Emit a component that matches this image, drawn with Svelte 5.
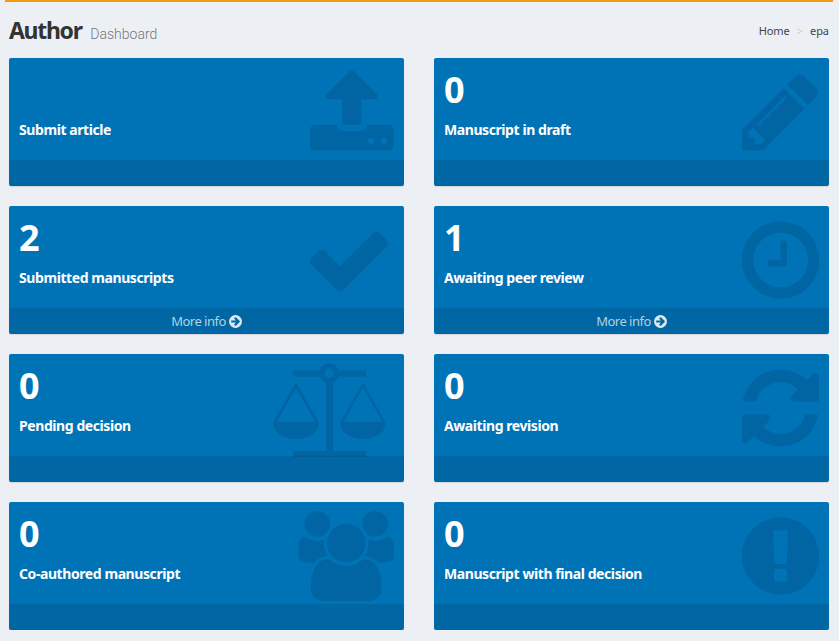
<script>
  // font-awesome style glyphs, 1792 units = 90px
  const glyphs = {
    upload: {
      x: 64,
      w: 1664,
      d: "M1344 1472q0-26-19-45t-45-19-45 19-19 45 19 45 45 19 45-19 19-45zm256 0q0-26-19-45t-45-19-45 19-19 45 19 45 45 19 45-19 19-45zm128-224v320q0 40-28 68t-68 28h-1472q-40 0-68-28t-28-68v-320q0-40 28-68t68-28h427q21 56 70.5 92t110.5 36h256q61 0 110.5-36t70.5-92h427q40 0 68 28t28 68zm-325-648q-17 40-59 40h-256v448q0 26-19 45t-45 19h-256q-26 0-45-19t-19-45v-448h-256q-42 0-59-40-17-39 14-69l448-448q18-19 45-19t45 19l448 448q31 30 14 69z"
    },
    pencil: {
      x: 128,
      w: 1536,
      d: "M491 1536l91-91-235-235-91 91v107h128v128h107zm523-928q0-22-22-22-10 0-17 7l-542 542q-7 7-7 17 0 22 22 22 10 0 17-7l542-542q7-7 7-17zm-54-192l416 416-832 832h-416v-416zm683 96q0 53-37 90l-166 166-416-416 166-165q36-38 90-38 53 0 91 38l235 234q37 39 37 91z"
    },
    check: {
      x: 0,
      w: 1792,
      d: "M1671 566q0 40-28 68l-724 724-136 136q-28 28-68 28t-68-28l-136-136-362-362q-28-28-28-68t28-68l136-136q28-28 68-28t68 28l294 295 656-657q28-28 68-28t68 28l136 136q28 28 28 68z"
    },
    clock: {
      x: 128,
      w: 1536,
      d: "M1024 544v448q0 14-9 23t-23 9h-320q-14 0-23-9t-9-23v-64q0-14 9-23t23-9h224v-352q0-14 9-23t23-9h64q14 0 23 9t9 23zm416 352q0-148-73-273t-198-198-273-73-273 73-198 198-73 273 73 273 198 198 273 73 273-73 198-198 73-273zm224 0q0 209-103 385.5t-279.5 279.5-385.5 103-385.5-103-279.5-279.5-103-385.5 103-385.5 279.5-279.5 385.5-103 385.5 103 279.5 279.5 103 385.5z"
    },
    refresh: {
      x: 128,
      w: 1536,
      d: "M1639 1056q0 5-1 7-64 268-268 434.5t-478 166.5q-146 0-282.5-55t-243.5-157l-129 129q-19 19-45 19t-45-19-19-45v-448q0-26 19-45t45-19h448q26 0 45 19t19 45-19 45l-137 137q71 66 161 102t187 36q134 0 250-65t186-179q11-17 53-117 8-23 30-23h192q13 0 22.5 9.5t9.5 22.5zm25-800v448q0 26-19 45t-45 19h-448q-26 0-45-19t-19-45 19-45l138-138q-148-137-349-137-134 0-250 65t-186 179q-11 17-53 117-8 23-30 23h-199q-13 0-22.5-9.5t-9.5-22.5v-7q65-268 270-434.5t480-166.5q146 0 284 55.5t245 156.5l130-129q19-19 45-19t45 19 19 45z"
    },
    users: {
      x: 0,
      w: 1920,
      d: "M593 896q-162 5-265 128h-134q-82 0-138-40.5t-56-118.5q0-353 124-353 6 0 43.5 21t97.5 42.5 119 21.5q67 0 133-23-5 37-5 66 0 139 81 256zm1071 637q0 120-73 189.5t-194 69.5h-874q-121 0-194-69.5t-73-189.5q0-53 3.5-103.5t14-109 26.5-108.5 43-97.5 62-81 85.5-53.5 111.5-20q10 0 43 21.5t73 48 107 48 135 21.5 135-21.5 107-48 73-48 43-21.5q61 0 111.5 20t85.5 53.5 62 81 43 97.5 26.5 108.5 14 109 3.5 103.5zm-1024-1277q0 106-75 181t-181 75-181-75-75-181 75-181 181-75 181 75 75 181zm704 384q0 159-112.5 271.5t-271.5 112.5-271.5-112.5-112.5-271.5 112.5-271.5 271.5-112.5 271.5 112.5 112.5 271.5zm576 225q0 78-56 118.5t-138 40.5h-134q-103-123-265-128 81-117 81-256 0-29-5-66 66 23 133 23 59 0 119-21.5t97.5-42.5 43.5-21q124 0 124 353zm-128-609q0 106-75 181t-181 75-181-75-75-181 75-181 181-75 181 75 75 181z"
    },
    alert: {
      x: 128,
      w: 1536,
      d: "M896 128q209 0 385.5 103t279.5 279.5 103 385.5-103 385.5-279.5 279.5-385.5 103-385.5-103-279.5-279.5-103-385.5 103-385.5 279.5-279.5 385.5-103zm128 1247v-190q0-14-9-23.5t-22-9.5h-192q-13 0-23 10t-10 23v190q0 13 10 23t23 10h192q13 0 22-9.5t9-23.5zm-2-344l18-621q0-12-10-18-10-8-24-8h-220q-14 0-24 8-10 6-10 18l17 621q0 10 10 17.5t24 7.5h185q14 0 23.5-7.5t10.5-17.5z"
    }
  };

  const cards = [
    { count: "", label: "Submit article", icon: "upload", more: false },
    { count: "0", label: "Manuscript in draft", icon: "pencil", more: false },
    { count: "2", label: "Submitted manuscripts", icon: "check", more: true },
    { count: "1", label: "Awaiting peer review", icon: "clock", more: true },
    { count: "0", label: "Pending decision", icon: "scale", more: false },
    { count: "0", label: "Awaiting revision", icon: "refresh", more: false },
    { count: "0", label: "Co-authored manuscript", icon: "users", more: false },
    { count: "0", label: "Manuscript with final decision", icon: "alert", more: false }
  ];
</script>

<div class="topbar"></div>

<header class="page-header">
  <h1>Author <small>Dashboard</small></h1>
  <ol class="breadcrumb">
    <li>Home</li>
    <li class="sep">&gt;</li>
    <li>epa</li>
  </ol>
</header>

<main class="grid">
  {#each cards as card}
    <div class="small-box">
      <div class="inner">
        <h3>{card.count}</h3>
        <p>{card.label}</p>
      </div>

      {#if card.icon === "scale"}
        <svg class="icon scale" viewBox="0 0 113 95" width="113" height="95">
          <rect x="20" y="7.3" width="27" height="6.4" />
          <rect x="66" y="7.3" width="27" height="6.4" />
          <path
            fill-rule="evenodd"
            d="M56.3 0.3a10 10 0 1 0 0 20a10 10 0 1 0 0-20zM56.3 5.8a4.5 4.5 0 1 1 0 9a4.5 4.5 0 1 1 0-9z"
          />
          <rect x="53" y="20" width="7" height="68" />
          <rect x="20" y="88" width="73" height="6" />
          <g class="pan">
            <path d="M1.5 60L23 22L44.5 60" />
            <path d="M68.5 60L90 22L111.5 60" />
          </g>
          <path d="M0 59H46C46 69 36 76 23 76S0 69 0 59Z" />
          <path d="M67 59H113C113 69 103 76 90 76S67 69 67 59Z" />
        </svg>
      {:else}
        {@const g = glyphs[card.icon]}
        <svg
          class="icon"
          viewBox="{g.x} 0 {g.w} 1792"
          height="90"
          style="width: {(g.w * 90) / 1792}px"
        >
          <path d={g.d} />
        </svg>
      {/if}

      <div class="small-box-footer">
        {#if card.more}
          More info
          <svg class="arrow" viewBox="0 0 1536 1792" width="13" height="15">
            <path
              d="M1285 896q0-27-18-45l-91-91-362-362q-18-18-45-18t-45 18l-91 91q-18 18-18 45t18 45l189 189h-502q-26 0-45 19t-19 45v128q0 26 19 45t45 19h502l-189 189q-19 19-19 45t19 45l91 91q18 18 45 18t45-18l362-362 91-91q18-18 18-45zm251 0q0 209-103 385.5t-279.5 279.5-385.5 103-385.5-103-279.5-279.5-103-385.5 103-385.5 279.5-279.5 385.5-103 385.5 103 279.5 279.5 103 385.5z"
            />
          </svg>
        {/if}
      </div>
    </div>
  {/each}
</main>

<style>
  :global(body) {
    background: #ecf0f5;
    font-family: "Noto Sans", "Open Sans", sans-serif;
  }

  .topbar {
    height: 2px;
    margin: 0 6px 0 5px;
    background: #f39c12;
  }

  .page-header {
    display: flex;
    justify-content: space-between;
    align-items: center;
    height: 56px;
    padding: 0 10px 0 9px;
  }

  h1 {
    margin: 0;
    font-size: 23px;
    font-weight: 700;
    letter-spacing: -1.3px;
    color: #333;
  }

  small {
    margin-left: 4px;
    font-family: Roboto, sans-serif;
    font-size: 14px;
    font-weight: 300;
    letter-spacing: 0;
    color: #777;
  }

  .breadcrumb {
    display: flex;
    gap: 7px;
    margin: 0;
    padding: 0;
    list-style: none;
    font-size: 11px;
    letter-spacing: -0.05px;
    color: #444;
  }

  .sep {
    color: #ccc;
  }

  .grid {
    display: grid;
    grid-template-columns: 395px 395px;
    column-gap: 30px;
    row-gap: 20px;
    padding: 0 10px 0 9px;
  }

  .small-box {
    position: relative;
    display: flex;
    flex-direction: column;
    height: 128px;
    border-radius: 2px;
    background: #0073b7;
    box-shadow: 0 1px 1px rgba(0, 0, 0, 0.1);
    color: #fff;
    overflow: hidden;
  }

  .inner {
    flex: 1;
    padding: 10px;
  }

  h3 {
    height: 42px;
    margin: 0 0 10px;
    font-size: 36px;
    font-weight: 700;
    line-height: 44px;
  }

  p {
    margin: 0;
    font-size: 14px;
    font-weight: 700;
    letter-spacing: -0.42px;
    line-height: 20px;
  }

  .icon {
    position: absolute;
    top: 9px;
    right: 10px;
    opacity: 0.11;
  }

  .icon.scale {
    right: 18px;
  }

  .pan path {
    fill: none;
    stroke: #000;
    stroke-width: 2.6;
    stroke-linejoin: round;
  }

  .small-box-footer {
    display: flex;
    justify-content: center;
    align-items: center;
    gap: 3px;
    height: 26px;
    background: rgba(0, 0, 0, 0.1);
    font-size: 13px;
    letter-spacing: -0.5px;
    color: rgba(255, 255, 255, 0.7);
  }

  .arrow {
    fill: rgba(255, 255, 255, 0.85);
  }
</style>
